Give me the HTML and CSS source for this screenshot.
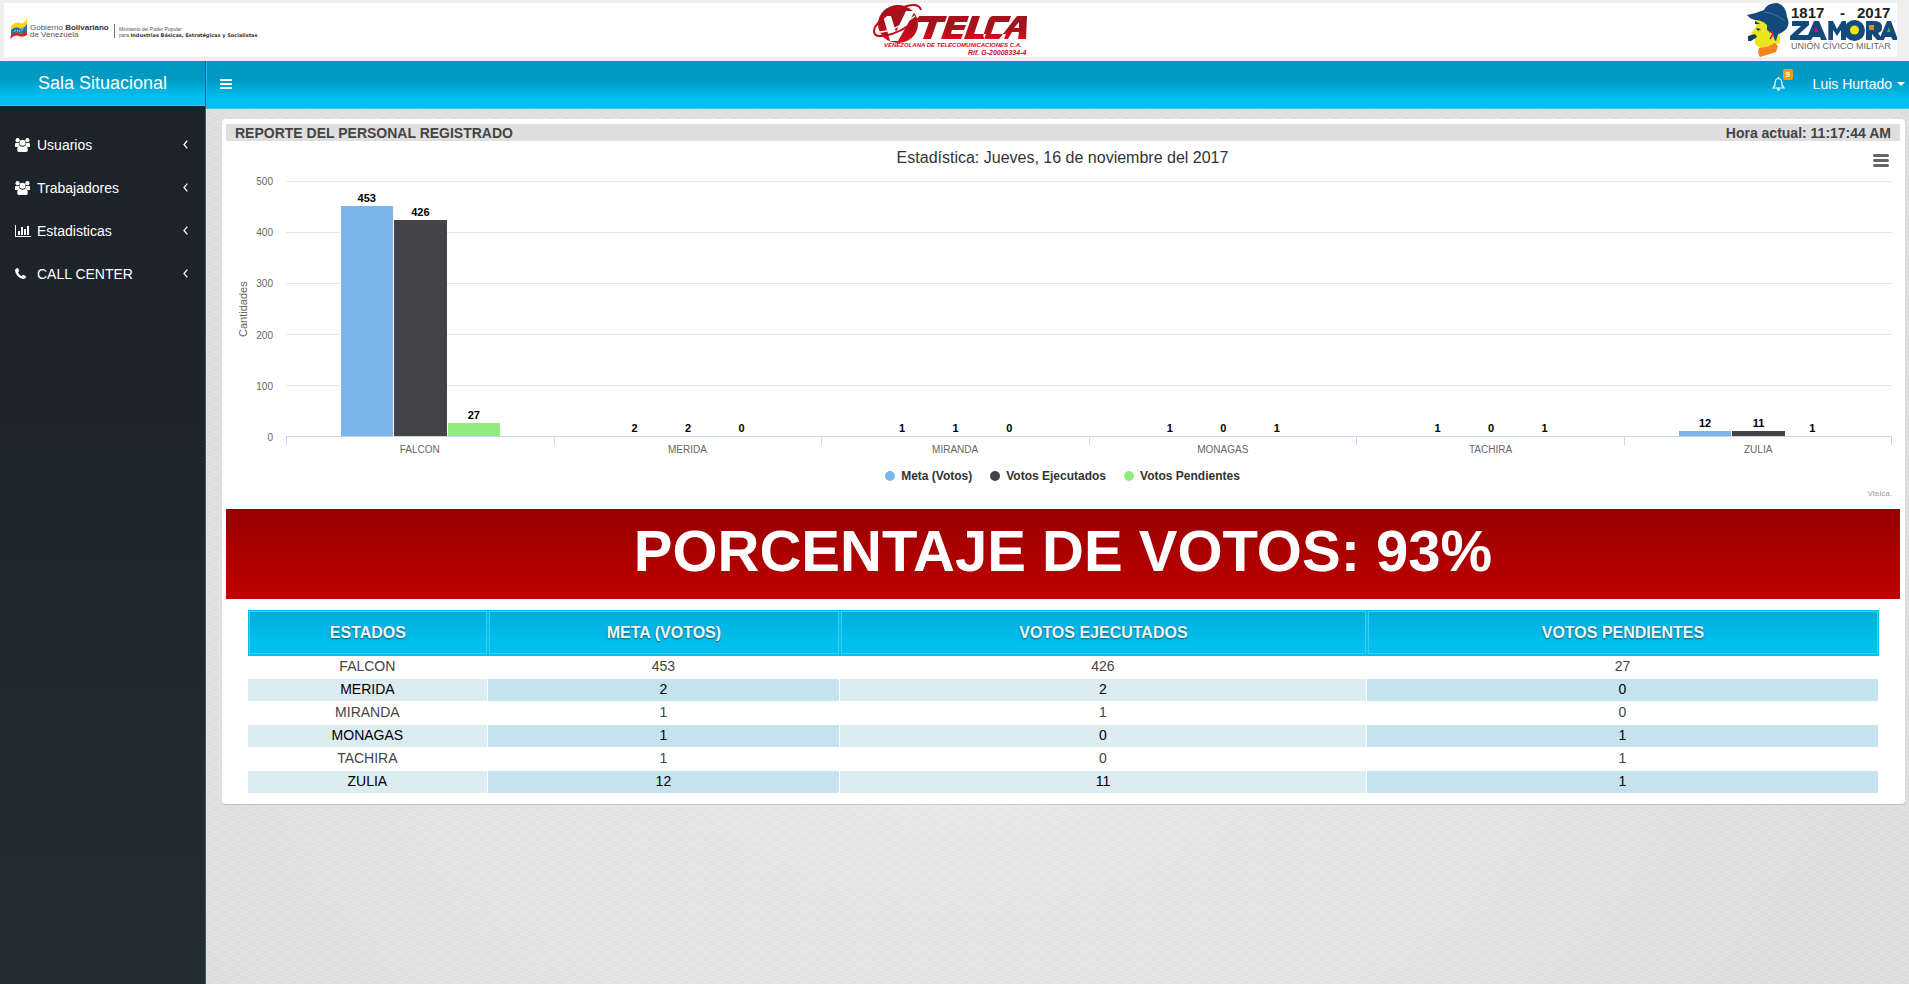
FILE: index.html
```html
<!DOCTYPE html>
<html lang="es">
<head>
<meta charset="utf-8">
<title>Sala Situacional</title>
<link rel="stylesheet" href="styles.css">
</head>
<body>
<svg class="defs" aria-hidden="true">
  <defs>
    <linearGradient id="red" x1="0" y1="0" x2="0" y2="1"><stop offset="0" stop-color="#a3131b"/><stop offset="0.5" stop-color="#a3131b"/><stop offset="1" stop-color="#e0061b"/></linearGradient>
    <symbol id="users" viewBox="0 0 15 14"><circle cx="2.6" cy="2.2" r="2.1"/><circle cx="12.4" cy="2.2" r="2.1"/><path d="M0 8.5V6.4Q0 4.4 1.4 4.7Q3 5.6 4.200 4.700Q4 6.600 4.800 7.700Q3.600 7.800 2.900 9H1Q0 9 0 8.500zM15 8.500V6.400Q15 4.400 13.600 4.700Q12 5.600 10.800 4.700Q11 6.600 10.200 7.700Q11.400 7.800 12.100 9H14Q15 9 15 8.500z"/><circle cx="7.500" cy="4.700" r="3"/><path d="M2.200 12.200Q2.200 8 4.800 7.800Q7.500 9.800 10.200 7.800Q12.800 8 12.800 12.200Q12.800 14 11 14H4Q2.200 14 2.200 12.200z"/></symbol>
    <symbol id="bars" viewBox="0 0 16 12"><path d="M0 0h1v11h15v1H0zM3 6h2v4H3zM6 2h2v8H6zM9 4h2v6H9zM12 1h2v9h-2z"/></symbol>
    <symbol id="phone" viewBox="0 0 11 11"><path d="M0 2.500Q.1.600 2.300 0Q3 0 3.200.500L4.200 2.600Q4.400 3.200 3.500 3.800Q2.900 4.200 3.200 4.700Q4.400 6.900 6.400 7.900Q6.900 8.100 7.300 7.400Q7.900 6.600 8.500 6.900L10.600 8.100Q11 8.300 10.900 8.900Q10.500 10.800 8.500 11Q5.500 11 2.600 7.900Q.1 5 0 2.500z"/></symbol>
    <symbol id="left" viewBox="0 0 5 9"><path d="M4.300.600L1 4.500L4.300 8.400" fill="none" stroke="currentColor" stroke-width="1.300"/></symbol>
  </defs>
</svg>

<header class="brandbar">
  <svg class="logo-gob" viewBox="0 0 250 28" role="img" aria-label="Gobierno Bolivariano de Venezuela">
    <path d="M1 8Q6 3 10 5T17 0V7Q13 12 9 10T1 13z" fill="#f6d50c"/>
    <path d="M1 12Q5 8 9 10T17 6V13Q13 17 9 15T1 18z" fill="#1d78b8"/>
    <path d="M1 17Q5 13 9 15T17 12V17Q13 20 9 18T0 21z" fill="#d3261f"/>
    <path d="M4 14l2-2 2 1 2 0 2-1 2-2" fill="none" stroke="#fff" stroke-dasharray="1 1"/>
    <g class="gob"><text x="20" y="12">Gobierno <tspan class="b">Bolivariano</tspan></text><text x="20" y="19">de Venezuela</text></g>
    <path d="M104.500 6v14" stroke="#777"/>
    <g class="min"><text x="109" y="13">Ministerio del Poder Popular</text><text x="109" y="19">para <tspan class="b wide">Industrias Básicas, Estratégicas y Socialistas</tspan></text></g>
  </svg>
  <svg class="logo-vt" viewBox="0 0 156 54" role="img" aria-label="Vtelca">
    <ellipse cx="25" cy="21" rx="20" ry="19" fill="url(#red)"/>
    <path d="M10 13h8l5 16 10-21h9L25 38h-8z" fill="#fff"/>
    <path d="M48 7Q46 0 34 3Q13 8 2 24Q-2 34 10 33Q27 31 46 15" fill="none" stroke="#c4081a" stroke-width="2"/>
    <path d="M6 29Q20 29 42 13" fill="none" stroke="#fff" stroke-width="1.500"/>
    <path d="M46 13h28l-2 6h-8l-6 17h-8l6-17H44zM76 13h20l-2 6H82l-1 3h12l-2 5H79l-1 4h12l-2 5H68zM99 13h8l-6 18h12l-2 5H91zM120 13h18l-2 6h-14l-4 12h15l-2 5h-17q-5 0-3-6l4-12q2-5 5-5zM144 13h10l-1 23h-8l1-7h-7l-4 7h-9zM146 19l-5 6h5z" fill="url(#red)" fill-rule="evenodd"/>
    <text class="vt1" x="11" y="44">VENEZOLANA DE TELECOMUNICACIONES C.A.</text>
    <text class="vt2" x="95" y="52">Rif. G-20008334-4</text>
  </svg>
  <svg class="logo-za" viewBox="0 0 150 54" role="img" aria-label="Zamora 1817 - 2017">
    <path d="M8 14L33 22L33 40L14 45Q6 42 8 36L3 32L9 24z" fill="#ebe51f"/>
    <path d="M12 45Q22 44 28 40L31 43L29 49L13 54Q10 50 12 45z" fill="#f58220"/>
    <path d="M0 12Q10 10 17 7Q20 0 30 0Q39 2 40 14Q43 20 40 25Q36 30 31 31L29 38Q27 37 26 31L20 27L20 22Q15 17 8 17Q3 16 0 12z" fill="#134a7c"/>
    <path d="M17 9Q28 10 38 18" stroke="#3d7baa" stroke-width="1" fill="none"/>
    <path d="M1 33L8 31L10 34L4 38H1zM9 25l5 1-3 2zM8 18l5 3-5 0z" fill="#123c66"/>
    <path d="M22 29q4-2 4 2l-3 5" fill="none" stroke="#e5007e" stroke-width="1.500"/>
    <g fill="#134a7c" fill-rule="evenodd">
      <path d="M45 18H62V22L51 32H62V37H43V33L54 23H45z"/>
      <path d="M67 18H72L80 37H74L73 34H66L64 37H59z"/>
      <path d="M81 37V18H86L90 26L95 18H99V37H94V27L90 33L86 27V37z"/>
      <circle cx="107.500" cy="27.500" r="10.500"/>
      <path d="M119 18H128Q135 18 135 24.500Q135 29 131 30L136 37H130L125 31V37H119z"/>
      <path d="M140 18H144L151 37H146L144 34H138L137 37H132z"/>
    </g>
    <path d="M81 18V37M118.500 18V37" stroke="#fff" stroke-width=".6"/>
    <circle cx="107.500" cy="27" r="4.500" fill="#f4e40b"/>
    <path d="M67 29h4l-2-6z" fill="#e5007e"/><path d="M122 22h5v5h-5z" fill="#f58220"/><path d="M140 29h3l-1-5z" fill="#50b848"/>
    <g class="za1"><text x="44" y="15">1817</text><text x="93" y="15">-</text><text x="110" y="15">2017</text></g>
    <text class="za2" x="44" y="46">UNIÓN CÍVICO MILITAR</text>
  </svg>
</header>

<div class="shell">
  <aside class="sidebar">
    <a class="brand" href="#">Sala Situacional</a>
    <nav class="menu">
      <a href="#"><svg class="ic users"><use href="#users"/></svg><span>Usuarios</span><svg class="chev"><use href="#left"/></svg></a>
      <a href="#"><svg class="ic users"><use href="#users"/></svg><span>Trabajadores</span><svg class="chev"><use href="#left"/></svg></a>
      <a href="#"><svg class="ic stats"><use href="#bars"/></svg><span>Estadisticas</span><svg class="chev"><use href="#left"/></svg></a>
      <a href="#"><svg class="ic phone"><use href="#phone"/></svg><span>CALL CENTER</span><svg class="chev"><use href="#left"/></svg></a>
    </nav>
  </aside>
  <div class="content">
    <div class="navbar">
      <button class="toggle" aria-label="Menú"><svg viewBox="0 0 12 10"><path d="M0 0h12v2H0zM0 4h12v2H0zM0 8h12v2H0z"/></svg></button>
      <button class="bell" aria-label="Notificaciones"><svg viewBox="0 0 13 14"><path d="M6.500 1.500Q3.300 1.900 3.300 5Q3.300 9 1 11H12Q9.700 9 9.700 5Q9.700 1.900 6.500 1.500zM6.500 0v1.500" fill="none" stroke="#fff" stroke-width="1.200"/><path d="M4.800 11.500h3.400Q8 13.800 6.500 13.800T4.800 11.500z" fill="#fff"/></svg><span class="badge">9</span></button>
      <button class="user">Luis Hurtado<span class="caret"></span></button>
    </div>
    <main class="page">
      <section class="card">
        <div class="card-title"><span>REPORTE DEL PERSONAL REGISTRADO</span><span>Hora actual: 11:17:44 AM</span></div>
        <div class="chart">
          <div class="chart-head"><h2>Estadística: Jueves, 16 de noviembre del 2017</h2><button class="ctx" aria-label="Menú del gráfico"><span></span><span></span><span></span></button></div>
          <div class="chart-body">
            <div class="ytitle">Cantidades</div>
            <div class="yaxis"><span>500</span><span>400</span><span>300</span><span>200</span><span>100</span><span>0</span></div>
            <div class="plotwrap">
              <div class="plot">
                <div class="group"><div class="bar blue" style="height:90.6%"><b>453</b></div><div class="bar dark" style="height:85.2%"><b>426</b></div><div class="bar green" style="height:5.4%"><b>27</b></div></div>
                <div class="group"><div class="bar blue" style="height:0.4%"><b>2</b></div><div class="bar dark" style="height:0.4%"><b>2</b></div><div class="bar green" style="height:0%"><b>0</b></div></div>
                <div class="group"><div class="bar blue" style="height:0.2%"><b>1</b></div><div class="bar dark" style="height:0.2%"><b>1</b></div><div class="bar green" style="height:0%"><b>0</b></div></div>
                <div class="group"><div class="bar blue" style="height:0.2%"><b>1</b></div><div class="bar dark" style="height:0%"><b>0</b></div><div class="bar green" style="height:0.2%"><b>1</b></div></div>
                <div class="group"><div class="bar blue" style="height:0.2%"><b>1</b></div><div class="bar dark" style="height:0%"><b>0</b></div><div class="bar green" style="height:0.2%"><b>1</b></div></div>
                <div class="group"><div class="bar blue" style="height:2.4%"><b>12</b></div><div class="bar dark" style="height:2.2%"><b>11</b></div><div class="bar green" style="height:0.2%"><b>1</b></div></div>
              </div>
              <div class="ticks"><i></i><i></i><i></i><i></i><i></i><i></i></div>
              <div class="cats"><span>FALCON</span><span>MERIDA</span><span>MIRANDA</span><span>MONAGAS</span><span>TACHIRA</span><span>ZULIA</span></div>
            </div>
          </div>
          <div class="legend"><span class="k blue">Meta (Votos)</span><span class="k dark">Votos Ejecutados</span><span class="k green">Votos Pendientes</span></div>
          <div class="credit">Vtelca.</div>
        </div>
        <h1 class="percent">PORCENTAJE DE VOTOS: 93%</h1>
        <table class="votes">
          <colgroup><col class="c1"><col class="c2"><col class="c3"><col class="c4"></colgroup>
          <thead><tr><th>ESTADOS</th><th>META (VOTOS)</th><th>VOTOS EJECUTADOS</th><th>VOTOS PENDIENTES</th></tr></thead>
          <tbody>
            <tr><td>FALCON</td><td>453</td><td>426</td><td>27</td></tr>
            <tr><td>MERIDA</td><td>2</td><td>2</td><td>0</td></tr>
            <tr><td>MIRANDA</td><td>1</td><td>1</td><td>0</td></tr>
            <tr><td>MONAGAS</td><td>1</td><td>0</td><td>1</td></tr>
            <tr><td>TACHIRA</td><td>1</td><td>0</td><td>1</td></tr>
            <tr><td>ZULIA</td><td>12</td><td>11</td><td>1</td></tr>
          </tbody>
        </table>
      </section>
    </main>
  </div>
</div>
</body>
</html>
```
FILE: styles.css
```css
* { box-sizing: border-box; }
body {
  margin: 0;
  min-height: 100vh;
  display: flex;
  flex-direction: column;
  font: 14px/20px "Liberation Sans", Arial, sans-serif;
  color: #444;
}
a { color: inherit; text-decoration: none; }
button { border: 0; padding: 0; background: none; font: inherit; color: inherit; cursor: pointer; }
.defs { position: absolute; width: 0; height: 0; }

.brandbar {
  height: 61px;
  border: solid #efefef;
  border-width: 3px 12px 4px 4px;
  background: #fff;
  display: grid;
  grid-template-columns: 1fr auto 1fr;
  align-items: center;
}
.logo-gob { width: 250px; height: 28px; margin: 4px 0 0 6px; }
.logo-vt { width: 156px; height: 54px; }
.logo-za { width: 150px; height: 54px; justify-self: end; }
.gob { font-size: 8px; fill: #555; }
.min { font-size: 5px; fill: #555; }
.b { font-weight: bold; fill: #333; }
.wide { font-family: "DejaVu Sans", sans-serif; }
.vt1 { font: italic bold 6px "Liberation Sans", sans-serif; fill: #cc0c1c; }
.vt2 { font: italic bold 7px "Liberation Sans", sans-serif; fill: #cc0c1c; }
.za1 { font: bold 15px "Liberation Sans", sans-serif; fill: #222; }
.za2 { font-size: 9px; fill: #666; }

.shell { flex: 1; display: flex; }
.sidebar {
  width: 206px;
  flex: none;
  background: linear-gradient(#1c2329 106px, #222d32);
  border-right: 1px solid #4a5560;
  color: #fff;
}
.brand {
  display: block;
  height: 45px;
  padding-top: 2px;
  line-height: 40px;
  font-size: 18px;
  text-align: center;
  background: linear-gradient(#0099c2 40%, #00c0ef 80%);
  border-bottom: 1px solid #2fcdf4;
}
.menu { padding-top: 17px; }
.menu a { display: flex; align-items: center; height: 43px; padding: 0 17px 0 15px; color: #fff; }
.menu span { flex: 1; }
.ic { fill: #fff; margin-right: 7px; width: 15px; height: 14px; }
.stats { width: 16px; height: 12px; margin-right: 6px; }
.phone { width: 11px; height: 11px; margin-right: 11px; }
.chev { width: 5px; height: 9px; }

.content {
  flex: 1;
  min-width: 0;
  background:
    repeating-conic-gradient(#ffffff2b 0 25%, transparent 0 50%) 0 0 / 4px 4px,
    repeating-conic-gradient(#ffffff18 0 25%, transparent 0 50%) 0 0 / 14px 10px,
    radial-gradient(ellipse 900px 560px at 45% 70%, #e6e6e6, #dadada);
}
.navbar {
  height: 48px;
  display: flex;
  align-items: center;
  padding: 0 4px 2px 13px;
  color: #fff;
  background: linear-gradient(#0099c2 40%, #00c0ef 80%);
  border-left: 1px solid #2bb6dc;
  border-bottom: 1px solid #2fcdf4;
}
.toggle { display: flex; }
.toggle svg { width: 12px; height: 10px; fill: #fff; }
.bell { margin-left: auto; position: relative; display: flex; }
.bell svg { width: 13px; height: 14px; }
.badge {
  position: absolute;
  left: 11px;
  top: -8px;
  width: 10px;
  height: 11px;
  border-radius: 2px;
  background: #f39c12;
  font: bold 8px/11px "Liberation Sans", sans-serif;
}
.user { display: flex; align-items: center; margin-left: 28px; }
.caret { border: 4px solid transparent; border-top-color: #fff; border-bottom: 0; margin-left: 5px; }

.page { padding: 10px 4px 0 16px; }
.card { background: #fff; border-radius: 4px; padding: 5px 5px 10px 4px; box-shadow: 0 1px 1px #0002; }
.card-title {
  display: flex;
  justify-content: space-between;
  height: 17px;
  padding: 0 9px;
  font-weight: bold;
  line-height: 19px;
  background: #dfdfdf;
}
.chart { height: 368px; padding: 7px 8px 0 11px; }
.chart-head { height: 33px; position: relative; }
.chart-head h2 { margin: 0; font-size: 16px; font-weight: normal; color: #333; text-align: center; padding-right: 4px; }
.ctx { position: absolute; right: 3px; top: 6px; display: flex; flex-direction: column; gap: 2px; width: 16px; }
.ctx span { height: 3px; border-radius: 2px; background: #666; }
.chart-body { display: flex; font-size: 10px; color: #666; }
.ytitle { writing-mode: vertical-rl; transform: rotate(180deg); width: 12px; height: 256px; line-height: 12px; font-size: 11px; text-align: center; }
.yaxis { width: 24px; height: 266px; margin: -4px 13px 0 0; display: flex; flex-direction: column; justify-content: space-between; text-align: right; line-height: 10px; }
.plotwrap { flex: 1; }
.plot {
  height: 256px;
  display: grid;
  grid-template-columns: repeat(6, 1fr);
  border-bottom: 1px solid #ccd6eb;
  background: repeating-linear-gradient(#e6e6e6 0 1px, transparent 1px 51px);
}
.group { display: flex; align-items: flex-end; padding: 0 20%; }
.bar { flex: 1; position: relative; border: solid #fff; border-width: 1px 0 0 1px; }
.bar b { position: absolute; left: 0; right: 0; bottom: 100%; padding-bottom: 2px; font-size: 11px; line-height: 12px; text-align: center; color: #000; }
.bar.blue { background: #7cb5ec; }
.bar.dark { background: #434348; }
.bar.green { background: #90ed7d; }
.ticks { display: grid; grid-template-columns: repeat(6, 1fr); height: 8px; border-right: 1px solid #ccd6eb; }
.ticks i { border-left: 1px solid #ccd6eb; }
.cats { display: grid; grid-template-columns: repeat(6, 1fr); text-align: center; line-height: 10px; }
.legend { display: flex; justify-content: center; gap: 18px; margin-top: 11px; padding-right: 4px; font: bold 12px/20px "Liberation Sans", sans-serif; color: #333; }
.k { display: flex; align-items: center; gap: 6px; }
.k::before { content: ""; width: 10px; height: 10px; border-radius: 50%; }
.k.blue::before { background: #7cb5ec; }
.k.dark::before { background: #434348; }
.k.green::before { background: #90ed7d; }
.credit { text-align: right; font-size: 8px; line-height: 16px; color: #999; }
.percent {
  margin: 0;
  height: 90px;
  line-height: 84px;
  font-size: 58px;
  text-align: center;
  color: #fff;
  background: linear-gradient(#980000, #c00000);
}
.votes {
  margin: 11px 21px 0 22px;
  width: calc(100% - 43px);
  table-layout: fixed;
  border-collapse: separate;
  border-spacing: 0;
  text-align: center;
}
.c1 { width: 14.7%; }
.c2 { width: 21.6%; }
.c3 { width: 32.3%; }
.c4 { width: 31.4%; }
.votes th {
  height: 46px;
  padding: 0;
  border: 1px solid #00c0ef;
  border-bottom-width: 2px;
  font-size: 16px;
  color: #f5f5f5;
  text-shadow: 0 1px 2px #0008;
  background: linear-gradient(#00addb, #00c0ef 80%);
  box-shadow: inset 0 0 0 1px #3ccdf0;
}
.votes td { height: 23px; padding: 0 0 2px; line-height: 20px; border: solid #fff; border-width: 0 1px 1px 0; }
.votes tbody tr:nth-child(even) { color: #000; background: #ddebf2; }
.votes tbody tr:nth-child(even) td:nth-child(even) { background: #c5e3ee; }
```
